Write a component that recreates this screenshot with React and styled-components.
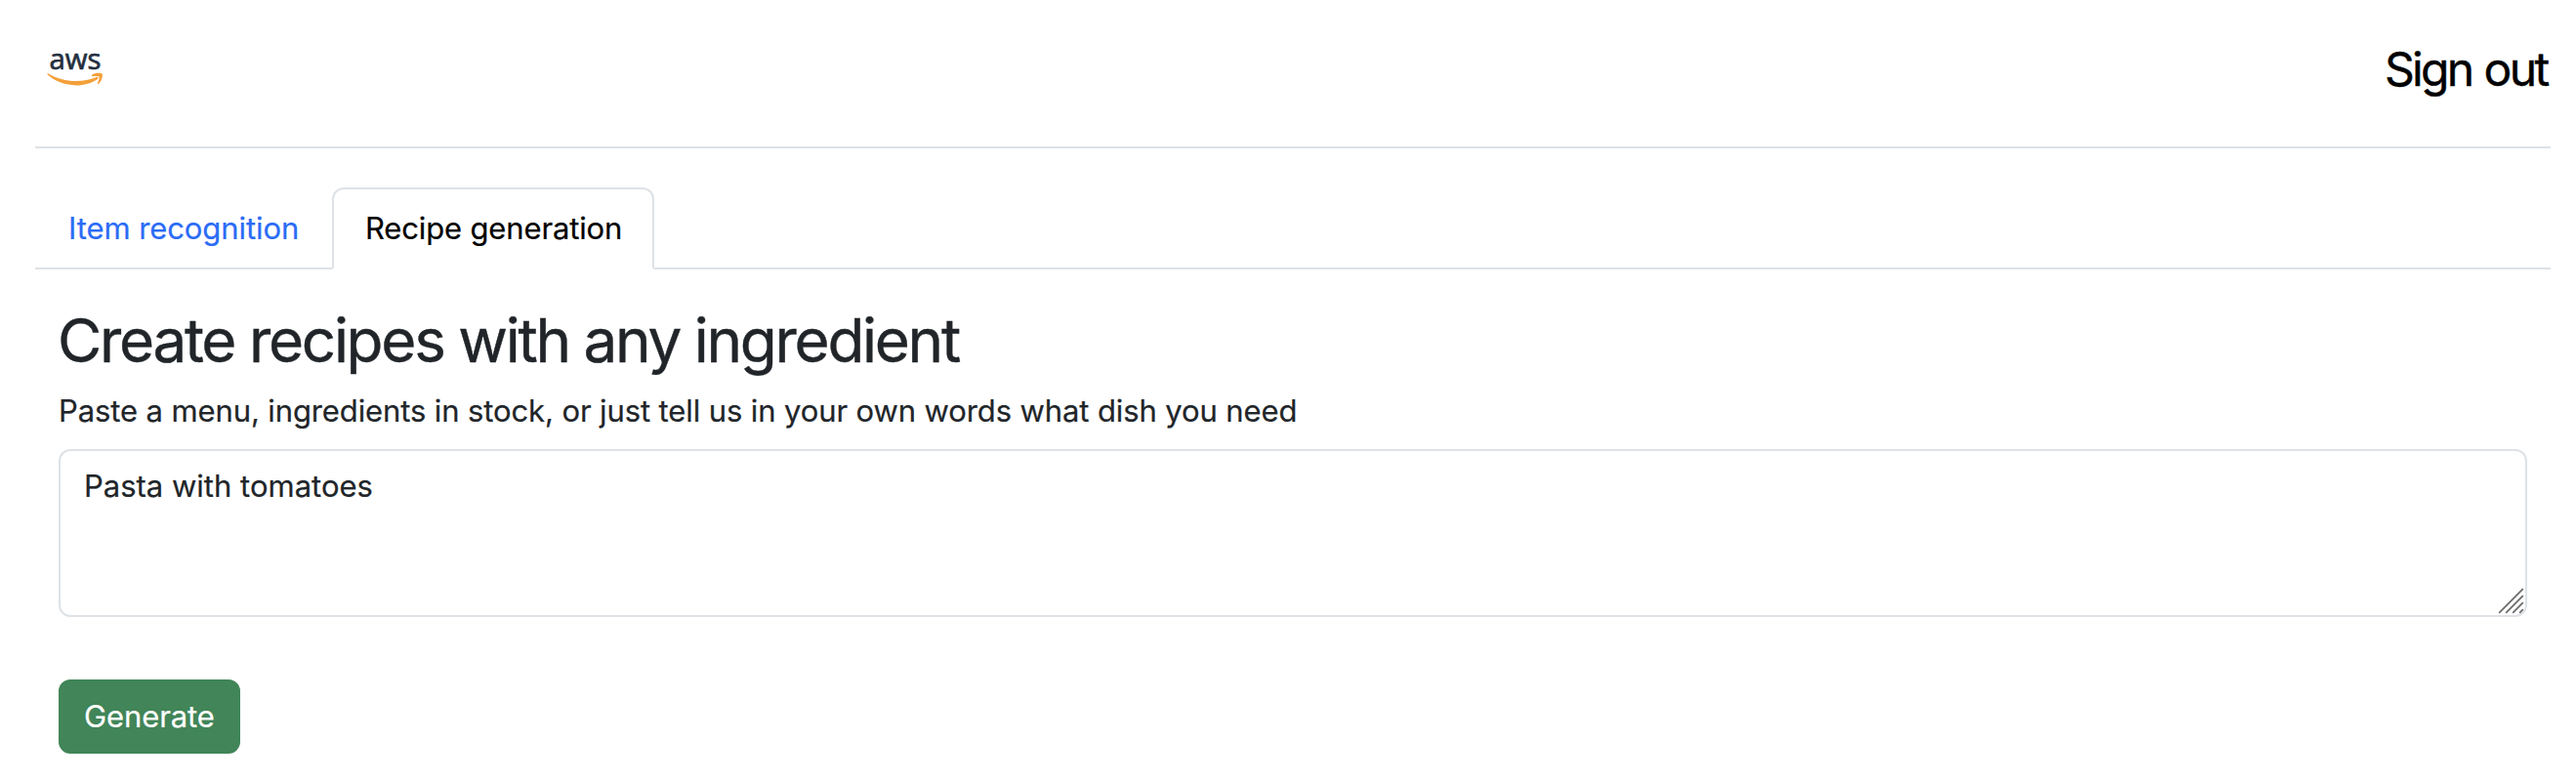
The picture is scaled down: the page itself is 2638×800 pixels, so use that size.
import React, { useState } from 'react';
import styled, { createGlobalStyle } from 'styled-components';

const GlobalStyle = createGlobalStyle`
  *, *::before, *::after { box-sizing: border-box; }
  body {
    margin: 0;
    background: #fff;
    color: #212529;
    font-family: Inter, "Liberation Sans", sans-serif;
    font-size: 31px;
    line-height: 48px;
    -webkit-text-stroke: 0.2px currentColor;
  }
`;

const Page = styled.div`
  display: flex;
  flex-direction: column;
  height: 800px;
  padding: 0 26px 0 36px;
  overflow: hidden;
`;

const Header = styled.header`
  display: flex;
  justify-content: space-between;
  align-items: flex-start;
  height: 152px;
  padding-top: 35px;
  border-bottom: 2px solid #dee2e6;
`;

const Logo = styled.svg`
  display: block;
  width: 80px;
  height: 60px;
`;

const SignOut = styled.a`
  margin-right: 3.5px;
  color: #000;
  font-size: 48px;
  line-height: 72px;
  letter-spacing: -2.65px;
  word-spacing: 1.2px;
  text-decoration: none;
  -webkit-text-stroke-width: 0.4px;
`;

const Tabs = styled.nav`
  display: flex;
  height: 84px;
  margin-top: 40px;
  border-bottom: 2px solid #dee2e6;
`;

const Tab = styled.button`
  flex: 0 0 ${(p) => p.$width}px;
  height: 84px;
  padding: 16px 0 16px 32px;
  border: 2px solid;
  border-color: ${(p) => (p.$active ? '#dee2e6 #dee2e6 #fff' : 'transparent')};
  border-radius: 12px 12px 0 0;
  background: ${(p) => (p.$active ? '#fff' : 'transparent')};
  color: ${(p) => (p.$active ? '#000' : '#2b6cf6')};
  font: inherit;
  letter-spacing: ${(p) => (p.$active ? '-0.15px' : '-0.08px')};
  text-align: left;
  white-space: nowrap;
`;

const Panel = styled.main`
  display: flex;
  flex-direction: column;
  align-items: flex-start;
  padding: 35px 24px 0;
`;

const Title = styled.h2`
  margin: 0 0 10px -1px;
  font-size: 62px;
  font-weight: 400;
  line-height: 76px;
  letter-spacing: -2.3px;
  word-spacing: -0.4px;
  -webkit-text-stroke-width: 0.4px;
`;

const Label = styled.label`
  margin-bottom: 15px;
  letter-spacing: -0.11px;
`;

const Field = styled.div`
  position: relative;
  align-self: stretch;
  height: 172px;
  margin-bottom: 64px;
`;

const TextArea = styled.textarea`
  display: block;
  width: 100%;
  height: 100%;
  padding: 12px 24px;
  border: 2px solid #dee2e6;
  border-radius: 12px;
  outline: none;
  resize: none;
  background: #fff;
  color: #212529;
  font: inherit;
`;

const Grip = styled.svg`
  position: absolute;
  right: 3px;
  bottom: 3px;
  width: 28px;
  height: 28px;
  pointer-events: none;
`;

const GenerateButton = styled.button`
  width: 186px;
  height: 76px;
  padding: 12px 24px;
  border: 2px solid #418558;
  border-radius: 12px;
  background: #418558;
  color: #fff;
  font: inherit;
  letter-spacing: -0.1px;
  text-align: left;
`;

function AwsLogo() {
  return (
    <Logo viewBox="36 35 80 60" role="img" aria-label="aws">
      <text
        x="50.4"
        y="70.7"
        fontFamily="'Open Sans', 'Noto Sans', sans-serif"
        fontSize="29.5"
        textLength="53"
        lengthAdjust="spacingAndGlyphs"
        fill="#232f3e"
        stroke="#232f3e"
        strokeWidth="0.7"
      >
        aws
      </text>
      <path d="M49.6 75.4 C58 80.2 67.5 83 77.8 83 C85.2 83 92.5 81.4 98.6 79 C100.3 78.4 101.3 79.8 100 80.9 C94 85.2 85.8 87.4 78.2 87.4 C67 87.4 56.6 83.6 48.7 76.6 C48 75.9 48.7 74.9 49.6 75.4 Z" fill="#f3a03a" />
      <path d="M94.2 76.6 C97.6 74.4 103.7 74.5 104.6 75.8 C105.5 77.2 104.2 83.3 100.9 86 C100.3 86.4 99.7 86 100 85.3 C100.8 83.4 102.2 79.5 101.4 78.6 C100.6 77.7 96.7 77.9 94.8 78.2 C93.9 78.2 93.6 77.2 94.2 76.6 Z" fill="#f3a03a" />
    </Logo>
  );
}

export default function App() {
  const [prompt, setPrompt] = useState('Pasta with tomatoes');
  return (
    <>
      <GlobalStyle />
      <Page>
        <Header>
          <AwsLogo />
          <SignOut>Sign out</SignOut>
        </Header>
        <Tabs>
          <Tab $width={304}>Item recognition</Tab>
          <Tab $width={330} $active>Recipe generation</Tab>
        </Tabs>
        <Panel>
          <Title>Create recipes with any ingredient</Title>
          <Label htmlFor="prompt">
            Paste a menu, ingredients in stock, or just tell us in your own words what dish you need
          </Label>
          <Field>
            <TextArea
              id="prompt"
              spellCheck={false}
              value={prompt}
              onChange={(e) => setPrompt(e.target.value)}
            />
            <Grip viewBox="0 0 28 28" fill="none" stroke="#6c6c6c" strokeWidth="1.8">
              <path d="M2.2 26.8 L26.8 2.2 M9.2 26.8 L26.8 9.2 M16.2 26.8 L26.8 16.2 M23.2 26.8 L26.8 23.2" />
            </Grip>
          </Field>
          <GenerateButton>Generate</GenerateButton>
        </Panel>
      </Page>
    </>
  );
}
